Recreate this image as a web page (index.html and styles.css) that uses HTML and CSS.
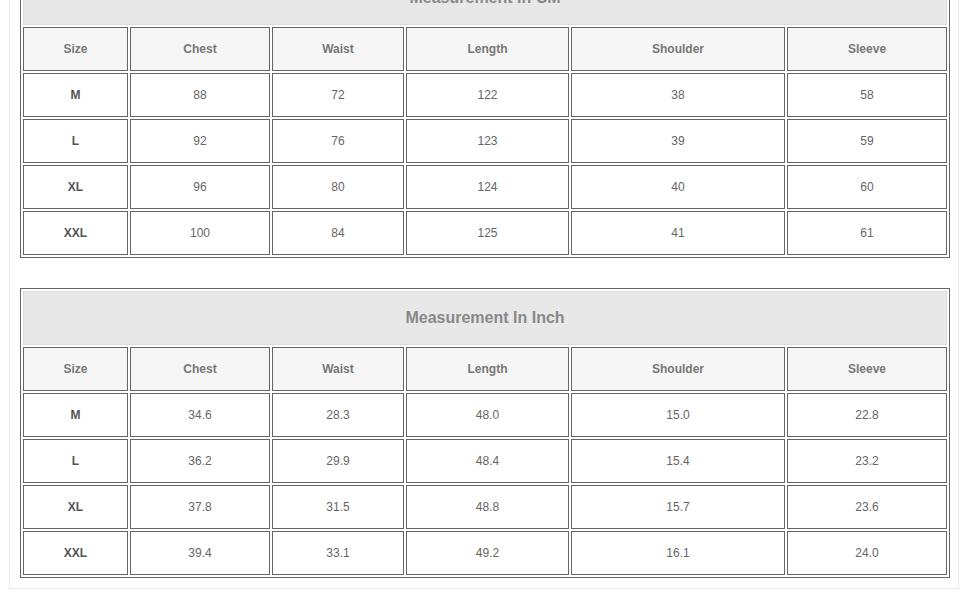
FILE: index.html
```html
<!DOCTYPE html>
<html>
<head>
<meta charset="utf-8">
<link rel="stylesheet" href="styles.css">
</head>
<body>
<div class="panel">
  <table class="size-table">
    <colgroup>
      <col class="c-size"><col class="c-chest"><col class="c-waist"><col class="c-length"><col class="c-shoulder"><col class="c-sleeve">
    </colgroup>
    <tr><td class="title" colspan="6">Measurement In CM</td></tr>
    <tr class="head"><td>Size</td><td>Chest</td><td>Waist</td><td>Length</td><td>Shoulder</td><td>Sleeve</td></tr>
    <tr><td class="sz">M</td><td>88</td><td>72</td><td>122</td><td>38</td><td>58</td></tr>
    <tr><td class="sz">L</td><td>92</td><td>76</td><td>123</td><td>39</td><td>59</td></tr>
    <tr><td class="sz">XL</td><td>96</td><td>80</td><td>124</td><td>40</td><td>60</td></tr>
    <tr><td class="sz">XXL</td><td>100</td><td>84</td><td>125</td><td>41</td><td>61</td></tr>
  </table>
  <table class="size-table second">
    <colgroup>
      <col class="c-size"><col class="c-chest"><col class="c-waist"><col class="c-length"><col class="c-shoulder"><col class="c-sleeve">
    </colgroup>
    <tr><td class="title" colspan="6">Measurement In Inch</td></tr>
    <tr class="head"><td>Size</td><td>Chest</td><td>Waist</td><td>Length</td><td>Shoulder</td><td>Sleeve</td></tr>
    <tr><td class="sz">M</td><td>34.6</td><td>28.3</td><td>48.0</td><td>15.0</td><td>22.8</td></tr>
    <tr><td class="sz">L</td><td>36.2</td><td>29.9</td><td>48.4</td><td>15.4</td><td>23.2</td></tr>
    <tr><td class="sz">XL</td><td>37.8</td><td>31.5</td><td>48.8</td><td>15.7</td><td>23.6</td></tr>
    <tr><td class="sz">XXL</td><td>39.4</td><td>33.1</td><td>49.2</td><td>16.1</td><td>24.0</td></tr>
  </table>
</div>
</body>
</html>
```

FILE: styles.css
```css
html, body {
  margin: 0;
  padding: 0;
  background: #ffffff;
}
body {
  font-family: "Liberation Sans", Arial, sans-serif;
  overflow: hidden;
}
.panel {
  box-sizing: border-box;
  width: 950px;
  margin: -43px 0 0 9px;
  padding: 10px 8px 10px 10px;
  border: 1px solid #ebebeb;
}
.size-table {
  table-layout: fixed;
  width: 930px;
  border-collapse: separate;
  border-spacing: 2px;
  border: 1px solid #666666;
}
.size-table.second {
  margin-top: 30px;
}
.c-size { width: 105px; }
.c-chest { width: 140px; }
.c-waist { width: 132px; }
.c-length { width: 163px; }
.c-shoulder { width: 214px; }
.c-sleeve { width: 160px; }
.size-table td {
  box-sizing: border-box;
  height: 44px;
  padding: 0;
  border: 1px solid #666666;
  text-align: center;
  vertical-align: middle;
  font-size: 12px;
  color: #666666;
  background: #ffffff;
}
.size-table td.title {
  height: 54px;
  border: 1px solid #dcdcdc;
  background: #e8e8e8;
  font-size: 16px;
  font-weight: bold;
  color: #888888;
}
.size-table .head td {
  background: #f6f6f6;
  font-weight: bold;
  color: #777777;
}
.size-table td.sz {
  font-weight: bold;
  color: #555555;
}
```
